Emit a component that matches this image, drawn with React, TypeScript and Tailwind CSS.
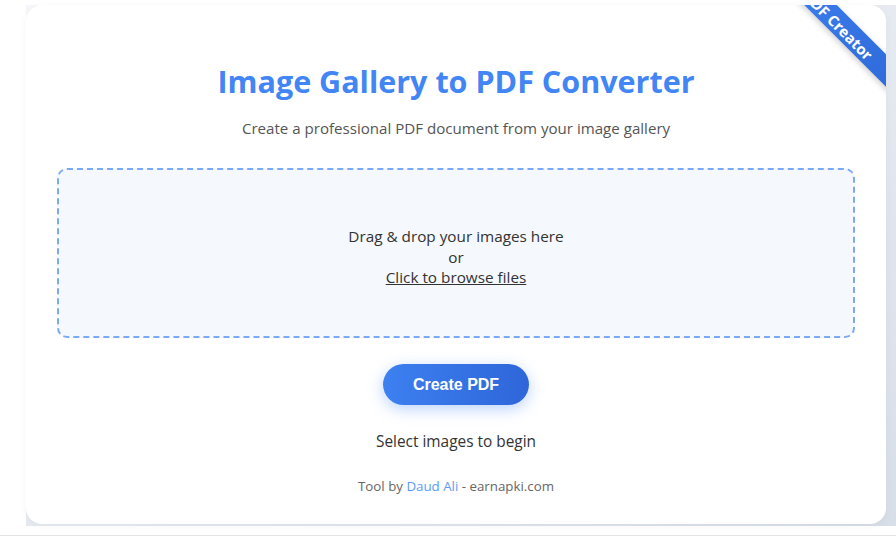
import React from "react";

export default function App() {
  const font = { fontFamily: '"Open Sans", "Noto Sans", sans-serif' };
  return (
    <div className="w-[896px] h-[537px] bg-white overflow-hidden" style={font}>
      <div className="ml-[26px] mt-[5px] h-[521px] bg-gradient-to-br from-[#f5f7fa] to-[#d8dee8]">
        <div className="relative w-[860px] h-[519px] bg-white rounded-2xl overflow-hidden shadow-[0_2px_10px_rgba(0,0,0,0.04)] flex flex-col items-center">
          <div className="absolute top-[17px] right-[-38px] w-[150px] pt-[3px] pb-0 pr-[26px] rotate-45 bg-gradient-to-r from-[#3b7ded] to-[#2f6ad9] text-white text-[15px] font-bold text-center leading-[20px] shadow-[0_2px_6px_rgba(0,0,0,0.2)]">
            PDF Creator
          </div>
          <h1 className="mt-[56px] text-[30.5px] leading-[40px] font-bold text-[#4285f4]">
            Image Gallery to PDF Converter
          </h1>
          <p className="mt-[15px] text-[15.1px] leading-[24px] text-[#555]">
            Create a professional PDF document from your image gallery
          </p>
          <div className="mt-[28px] w-[798px] h-[170px] border-2 border-dashed border-[#7aa9f6] rounded-[10px] bg-[#f5f8fd] flex flex-col items-center pt-[56px] text-[15.3px] leading-[20.5px] text-[#333]">
            <div>Drag &amp; drop your images here</div>
            <div>or</div>
            <div className="underline">Click to browse files</div>
          </div>
          <button
            className="mt-[26px] w-[146px] h-[41px] rounded-full bg-gradient-to-r from-[#3d80f0] to-[#2e66d9] text-white text-[16px] font-bold shadow-[0_4px_15px_rgba(59,130,246,0.35)]"
            style={{ fontFamily: '"Liberation Sans", Arial, sans-serif' }}
          >
            Create PDF
          </button>
          <div className="mt-[25px] text-[15.4px] leading-[24px] text-[#333]">
            Select images to begin
          </div>
          <div className="mt-[22px] text-[13.3px] leading-[20px] text-[#666]">
            Tool by <span className="text-[#5c9cf5]">Daud Ali</span> - earnapki.com
          </div>
        </div>
      </div>
      <div className="mt-[9px] h-px bg-[#e3e3e3]" />
    </div>
  );
}
